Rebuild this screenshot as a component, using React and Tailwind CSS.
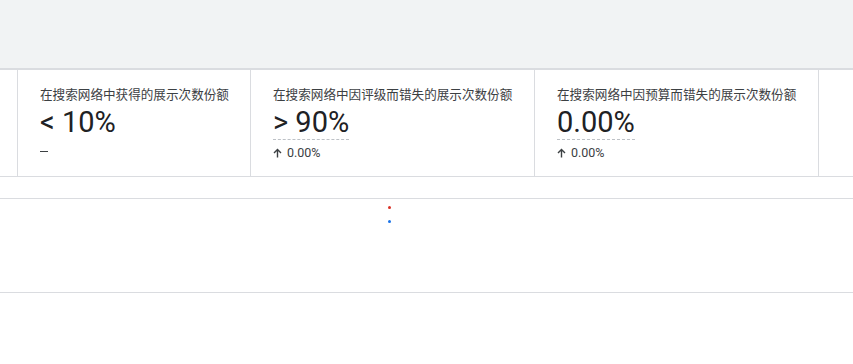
export default function App() {
  const cards = [
    { w: "w-[233px]", title: "在搜索网络中获得的展示次数份额", value: "< 10%", dashed: false, sub: null },
    { w: "w-[284px]", title: "在搜索网络中因评级而错失的展示次数份额", value: "> 90%", dashed: true, sub: "0.00%" },
    { w: "w-[284px]", title: "在搜索网络中因预算而错失的展示次数份额", value: "0.00%", dashed: true, sub: "0.00%" },
  ];
  return (
    <div className="w-[853px] h-[364px] bg-white overflow-hidden" style={{ fontFamily: "Roboto, 'Noto Sans CJK SC', sans-serif" }}>
      <div className="h-[68px] bg-[#f1f3f4]" />
      <div className="flex h-[109px] border-t-2 border-b border-[#dadce0]">
        <div className="w-[18px] shrink-0 border-r border-[#dadce0]" />
        {cards.map((c, i) => (
          <div key={i} className={`${c.w} shrink-0 border-r border-[#dadce0] pl-[22px] pt-[16px]`}>
            <div className="text-[12.6px] leading-[18px] text-[#3c4043] whitespace-nowrap">{c.title}</div>
            <div className="flex mt-[2px]">
              <div className={`text-[29px] leading-[32px] text-[#202124] pb-[1px] ${c.dashed ? "border-b border-dashed border-[#bdc1c6]" : ""}`}>{c.value}</div>
            </div>
            {c.sub ? (
              <div className="mt-[4px] flex items-center gap-[5px] text-[12.5px] leading-[17px] text-[#3c4043]">
                <svg width="9" height="10" viewBox="0 0 9 10" className="shrink-0">
                  <path d="M4.5 9.5V1.5M1 5L4.5 1.5L8 5" stroke="#3c4043" strokeWidth="1.4" fill="none" />
                </svg>
                <span>{c.sub}</span>
              </div>
            ) : (
              <div className="mt-[4px] text-[12px] leading-[16px] text-[#3c4043] flex items-center h-[16px]">
                <div className="w-[8px] h-[1px] bg-[#3c4043]" />
              </div>
            )}
          </div>
        ))}
        <div className="flex-1" />
      </div>
      <div className="h-[21px]" />
      <div className="h-[95px] border-t border-b border-[#dadce0] flex justify-center">
        <div className="flex flex-col items-center pt-[7px] gap-[11px] ml-[-74px]">
          <div className="w-[3px] h-[3px] rounded-full bg-[#d93025]" />
          <div className="w-[3px] h-[3px] rounded-full bg-[#1a73e8]" />
        </div>
      </div>
    </div>
  );
}
